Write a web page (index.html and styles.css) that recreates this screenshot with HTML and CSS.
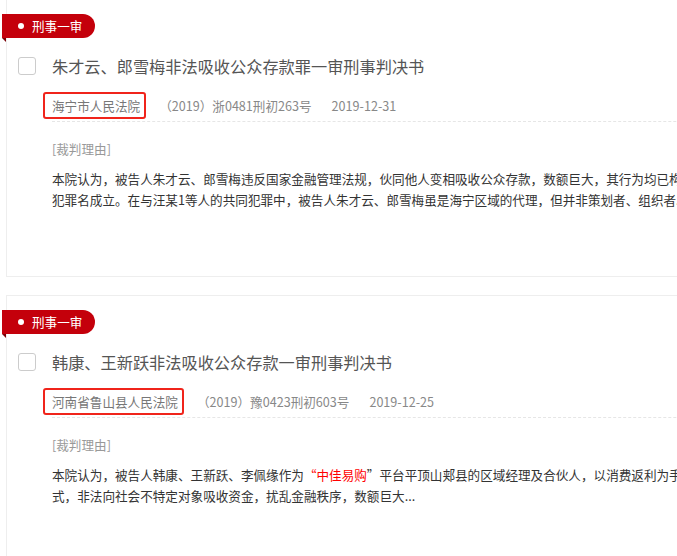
FILE: index.html
```html
<!DOCTYPE html>
<html lang="zh-CN">
<head>
<meta charset="utf-8">
<title>裁判文书列表</title>
<link rel="stylesheet" href="styles.css">
</head>
<body>
<div class="list">
  <div class="card">
    <div class="tag"><span class="dot"></span>刑事一审</div>
    <div class="head">
      <span class="checkbox"></span>
      <h3 class="title">朱才云、郎雪梅非法吸收公众存款罪一审刑事判决书</h3>
    </div>
    <div class="meta">
      <span class="court">海宁市人民法院</span>
      <span class="case">（2019）浙0481刑初263号</span>
      <span class="date">2019-12-31</span>
    </div>
    <div class="label">[裁判理由]</div>
    <p class="reason">本院认为，被告人朱才云、郎雪梅违反国家金融管理法规，伙同他人变相吸收公众存款，数额巨大，其行为均已构成非法吸收公众存款罪，公诉机关指控的<br>犯罪名成立。在与汪某1等人的共同犯罪中，被告人朱才云、郎雪梅虽是海宁区域的代理，但并非策划者、组织者...</p>
  </div>
  <div class="card">
    <div class="tag"><span class="dot"></span>刑事一审</div>
    <div class="head">
      <span class="checkbox"></span>
      <h3 class="title">韩康、王新跃非法吸收公众存款一审刑事判决书</h3>
    </div>
    <div class="meta">
      <span class="court">河南省鲁山县人民法院</span>
      <span class="case">（2019）豫0423刑初603号</span>
      <span class="date">2019-12-25</span>
    </div>
    <div class="label">[裁判理由]</div>
    <p class="reason">本院认为，被告人韩康、王新跃、李佩缘作为<span class="hl">“中佳易购</span>”平台平顶山郏县的区域经理及合伙人，以消费返利为手段等方<br>式，非法向社会不特定对象吸收资金，扰乱金融秩序，数额巨大...</p>
  </div>
</div>
</body>
</html>
```
FILE: styles.css
```css
html, body {
  margin: 0;
  padding: 0;
  background: #fff;
  overflow: hidden;
}
body {
  width: 677px;
  height: 556px;
  font-family: "Noto Sans CJK SC", "Microsoft YaHei", sans-serif;
}
.list {
  margin-top: -1px;
  padding-left: 6px;
  display: flex;
  flex-direction: column;
  gap: 18px;
}
.card {
  width: 1000px;
  border: 1px solid #eee;
  padding: 14px 0 66px 0;
  flex: none;
}
.tag {
  position: relative;
  margin-left: -5px;
  width: 93px;
  height: 24px;
  box-sizing: border-box;
  padding-left: 16px;
  background: #c4000b;
  border-radius: 0 12px 12px 0;
  color: #fff;
  font-size: 12.6px;
  line-height: 24px;
  display: flex;
  align-items: center;
}
.tag::after {
  content: "";
  position: absolute;
  left: 0;
  top: 24px;
  border-top: 4px solid #7a0006;
  border-left: 4px solid transparent;
}
.dot {
  width: 6px;
  height: 6px;
  border-radius: 50%;
  background: #fff;
  margin-right: 8px;
  flex: none;
}
.head {
  display: flex;
  align-items: center;
  margin-top: 16px;
  padding-left: 11px;
  gap: 16px;
}
.checkbox {
  width: 18px;
  height: 18px;
  box-sizing: border-box;
  border: 1px solid #ccc;
  border-radius: 3px;
  background: #fff;
  flex: none;
}
.title {
  margin: 0;
  font-size: 16.2px;
  font-weight: normal;
  color: #555;
  line-height: 24px;
}
.meta {
  display: flex;
  align-items: center;
  margin: 14px 0 0 45px;
  padding-bottom: 2px;
  border-bottom: 1px dashed #e6e6e6;
  font-size: 12.6px;
  color: #888;
  white-space: nowrap;
}
.court {
  border: 2px solid #f0241b;
  border-radius: 3px;
  padding: 2px 4px 2px 7px;
  margin-left: -9px;
  line-height: 19px;
  color: #777;
}
.case {
  margin-left: 13px;
}
.date {
  margin-left: 20px;
}
.label {
  margin: 17px 0 0 45px;
  font-size: 12.6px;
  line-height: 20px;
  color: #999;
}
.reason {
  margin: 9px 0 0 45px;
  font-size: 12.6px;
  line-height: 21px;
  color: #333;
  white-space: nowrap;
}
.hl {
  color: #f00;
}
```
